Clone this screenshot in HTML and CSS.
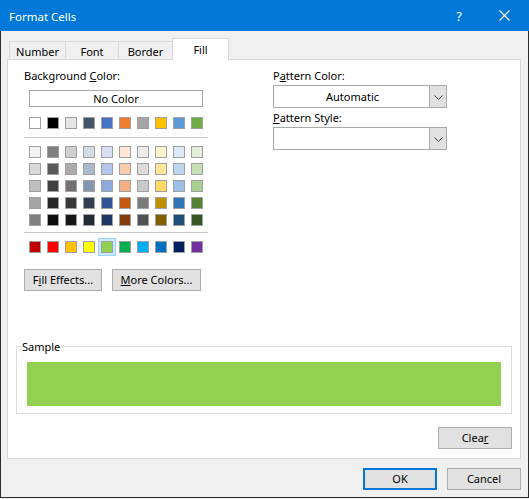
FILE: index.html
```html
<!DOCTYPE html>
<html>
<head>
<meta charset="utf-8">
<title>Format Cells</title>
<link rel="stylesheet" href="styles.css">
</head>
<body>
<div class="window">
  <div class="titlebar">
    <span class="title">Format Cells</span>
    <span class="help">?</span>
    <svg class="close" width="11" height="11" viewBox="0 0 11 11"><path d="M0.5 0.5 L10.5 10.5 M10.5 0.5 L0.5 10.5" stroke="#fff" stroke-width="1.1" fill="none"/></svg>
  </div>
  <div class="frame">
    <div class="tabs">
      <div class="tab t-number">Number</div>
      <div class="tab t-font">Font</div>
      <div class="tab t-border">Border</div>
      <div class="tab t-fill active">Fill</div>
    </div>
    <div class="panel">
      <div class="columns">
        <div class="col-left">
          <div class="label">Background <u>C</u>olor:</div>
          <div class="nocolor">No Color</div>
          <div class="swatch-row top">
            <span class="sw" style="background:#ffffff"></span>
            <span class="sw" style="background:#000000"></span>
            <span class="sw" style="background:#e7e6e6"></span>
            <span class="sw" style="background:#44546a"></span>
            <span class="sw" style="background:#4472c4"></span>
            <span class="sw" style="background:#ed7d31"></span>
            <span class="sw" style="background:#a5a5a5"></span>
            <span class="sw" style="background:#ffc000"></span>
            <span class="sw" style="background:#5b9bd5"></span>
            <span class="sw" style="background:#70ad47"></span>
          </div>
          <div class="sep"></div>
          <div class="grid">
            <span class="sw" style="background:#f2f2f2"></span>
            <span class="sw" style="background:#7f7f7f"></span>
            <span class="sw" style="background:#d0cece"></span>
            <span class="sw" style="background:#d6dce4"></span>
            <span class="sw" style="background:#d9e1f2"></span>
            <span class="sw" style="background:#fce4d6"></span>
            <span class="sw" style="background:#ededed"></span>
            <span class="sw" style="background:#fff2cc"></span>
            <span class="sw" style="background:#ddebf7"></span>
            <span class="sw" style="background:#e2efda"></span>

            <span class="sw" style="background:#d9d9d9"></span>
            <span class="sw" style="background:#595959"></span>
            <span class="sw" style="background:#aeaaaa"></span>
            <span class="sw" style="background:#acb9ca"></span>
            <span class="sw" style="background:#b4c6e7"></span>
            <span class="sw" style="background:#f8cbad"></span>
            <span class="sw" style="background:#dbdbdb"></span>
            <span class="sw" style="background:#ffe699"></span>
            <span class="sw" style="background:#bdd7ee"></span>
            <span class="sw" style="background:#c6e0b4"></span>

            <span class="sw" style="background:#bfbfbf"></span>
            <span class="sw" style="background:#404040"></span>
            <span class="sw" style="background:#757171"></span>
            <span class="sw" style="background:#8497b0"></span>
            <span class="sw" style="background:#8ea9db"></span>
            <span class="sw" style="background:#f4b084"></span>
            <span class="sw" style="background:#c9c9c9"></span>
            <span class="sw" style="background:#ffd966"></span>
            <span class="sw" style="background:#9bc2e6"></span>
            <span class="sw" style="background:#a9d08e"></span>

            <span class="sw" style="background:#a6a6a6"></span>
            <span class="sw" style="background:#262626"></span>
            <span class="sw" style="background:#3a3838"></span>
            <span class="sw" style="background:#333f4f"></span>
            <span class="sw" style="background:#305496"></span>
            <span class="sw" style="background:#c65911"></span>
            <span class="sw" style="background:#7b7b7b"></span>
            <span class="sw" style="background:#bf8f00"></span>
            <span class="sw" style="background:#2f75b5"></span>
            <span class="sw" style="background:#548235"></span>

            <span class="sw" style="background:#808080"></span>
            <span class="sw" style="background:#0d0d0d"></span>
            <span class="sw" style="background:#161616"></span>
            <span class="sw" style="background:#222b35"></span>
            <span class="sw" style="background:#203764"></span>
            <span class="sw" style="background:#833c0c"></span>
            <span class="sw" style="background:#525252"></span>
            <span class="sw" style="background:#806000"></span>
            <span class="sw" style="background:#1f4e78"></span>
            <span class="sw" style="background:#375623"></span>
          </div>
          <div class="sep sep2"></div>
          <div class="swatch-row std">
            <span class="sw" style="background:#c00000"></span>
            <span class="sw" style="background:#ff0000"></span>
            <span class="sw" style="background:#ffc000"></span>
            <span class="sw" style="background:#ffff00"></span>
            <span class="sw selected" style="background:#92d050"></span>
            <span class="sw" style="background:#00b050"></span>
            <span class="sw" style="background:#00b0f0"></span>
            <span class="sw" style="background:#0070c0"></span>
            <span class="sw" style="background:#002060"></span>
            <span class="sw" style="background:#7030a0"></span>
          </div>
          <div class="btn-row">
            <button class="btn fill-effects">F<u>i</u>ll Effects...</button>
            <button class="btn more-colors"><u>M</u>ore Colors...</button>
          </div>
        </div>
        <div class="col-right">
          <div class="label">P<u>a</u>ttern Color:</div>
          <div class="select">
            <span class="select-text">Automatic</span>
            <span class="select-btn"><svg width="9" height="5" viewBox="0 0 9 5"><path d="M0.5 0.5 L4.5 4.3 L8.5 0.5" stroke="#444" stroke-width="1" fill="none"/></svg></span>
          </div>
          <div class="label label2"><u>P</u>attern Style:</div>
          <div class="select">
            <span class="select-text"></span>
            <span class="select-btn"><svg width="9" height="5" viewBox="0 0 9 5"><path d="M0.5 0.5 L4.5 4.3 L8.5 0.5" stroke="#444" stroke-width="1" fill="none"/></svg></span>
          </div>
        </div>
      </div>
      <div class="sample">
        <span class="legend">Sample</span>
        <div class="sample-fill"></div>
      </div>
      <div class="clear-row">
        <button class="btn clear">Clea<u>r</u></button>
      </div>
    </div>
    <div class="footer">
      <button class="btn ok">OK</button>
      <button class="btn cancel">Cancel</button>
    </div>
  </div>
</div>
</body>
</html>
```

FILE: styles.css
```css
* {
  box-sizing: border-box;
}

html, body {
  margin: 0;
  padding: 0;
  background: #f0f0f0;
}

body {
  font-family: "Noto Sans", "Open Sans", sans-serif;
  font-size: 11px;
  color: #000;
}

u {
  text-decoration: underline;
  text-underline-offset: 1px;
}

.window {
  width: 529px;
  height: 498px;
  display: flex;
  flex-direction: column;
  background: #f0f0f0;
}

.titlebar {
  flex: none;
  height: 31px;
  background: #0078d7;
  color: #fff;
  display: flex;
  align-items: center;
  padding-left: 9px;
  padding-right: 19px;
}

.title {
  flex: 1;
  font-size: 11.5px;
  padding-top: 1px;
}

.help {
  font-size: 13px;
  line-height: 13px;
  margin-right: 37px;
  padding-top: 1px;
}

.close {
  display: block;
}

.frame {
  flex: 1;
  display: flex;
  flex-direction: column;
  border: 1px solid #2b2b2b;
  border-top: none;
  padding: 7px 7px 0 6px;
}

.tabs {
  flex: none;
  height: 21px;
  display: flex;
  align-items: flex-end;
  padding-left: 2px;
}

.tab {
  height: 18px;
  border: 1px solid #d9d9d9;
  border-bottom: none;
  background: #f0f0f0;
  text-align: center;
  line-height: 17px;
  padding-top: 1px;
  margin-left: -1px;
}

.t-number {
  width: 57px;
  margin-left: 0;
}

.t-font {
  width: 54px;
}

.t-border {
  width: 55px;
}

.tab.active {
  width: 57px;
  height: 22px;
  margin-bottom: -1px;
  background: #fff;
  position: relative;
  z-index: 1;
  line-height: 20px;
  padding-top: 1px;
}

.panel {
  flex: none;
  height: 400px;
  background: #fff;
  border: 1px solid #d9d9d9;
  display: flex;
  flex-direction: column;
}

.columns {
  display: flex;
}

.col-left {
  width: 265px;
  padding-left: 16px;
  padding-top: 8px;
}

.col-right {
  padding-top: 8px;
}

.label {
  height: 16px;
  line-height: 16px;
}

.label2 {
  margin-top: 2px;
}

.nocolor {
  margin: 6px 0 0 5px;
  width: 174px;
  height: 17px;
  border: 1px solid #a9a9a9;
  text-align: center;
  line-height: 15px;
}

.swatch-row {
  display: flex;
  gap: 6px;
  margin-left: 5px;
}

.swatch-row.top {
  margin-top: 10px;
}

.sw {
  display: block;
  width: 12px;
  height: 12px;
  border: 1px solid #a0a0a0;
}

.sw.selected {
  box-shadow: 0 0 0 2px #cce8ff, 0 0 0 3px #99d1ff;
}

.sep {
  margin-top: 8px;
  width: 184px;
  height: 1px;
  background: #c8c8c8;
}

.sep2 {
  margin-top: 6px;
}

.grid {
  margin-top: 8px;
  margin-left: 5px;
  display: grid;
  grid-template-columns: repeat(10, 12px);
  column-gap: 6px;
  row-gap: 5px;
}

.swatch-row.std {
  margin-top: 8px;
}

.btn-row {
  margin-top: 16px;
  display: flex;
  gap: 10px;
}

.btn {
  height: 22px;
  padding: 0;
  margin: 0;
  background: #e1e1e1;
  border: 1px solid #adadad;
  font-family: inherit;
  font-size: 11px;
  color: #000;
  line-height: 18px;
}

.fill-effects {
  width: 78px;
}

.more-colors {
  width: 89px;
}

.select {
  margin-top: 1px;
  width: 174px;
  height: 23px;
  border: 1px solid #a9a9a9;
  display: flex;
}

.select-text {
  flex: 1;
  text-align: center;
  line-height: 21px;
  padding-left: 2px;
}

.select-btn {
  width: 17px;
  background: #e1e1e1;
  border-left: 1px solid #adadad;
  display: flex;
  align-items: center;
  justify-content: center;
  padding-top: 1px;
}

.select-btn svg {
  display: block;
}

.sample {
  position: relative;
  margin: 55px 8px 0 8px;
  height: 68px;
  border: 1px solid #dcdcdc;
  padding: 15px 10px 7px 10px;
}

.legend {
  position: absolute;
  left: 5px;
  top: -8px;
  background: #fff;
  line-height: 16px;
  padding: 0 1px 0 0;
}

.sample-fill {
  height: 44px;
  background: #92d050;
}

.clear-row {
  display: flex;
  justify-content: flex-end;
  margin: 13px 8px 0 0;
}

.clear {
  width: 74px;
}

.footer {
  margin-top: 9px;
  display: flex;
  justify-content: flex-end;
  gap: 10px;
}

.ok {
  width: 74px;
  border: 2px solid #0078d7;
}

.cancel {
  width: 74px;
}
```
